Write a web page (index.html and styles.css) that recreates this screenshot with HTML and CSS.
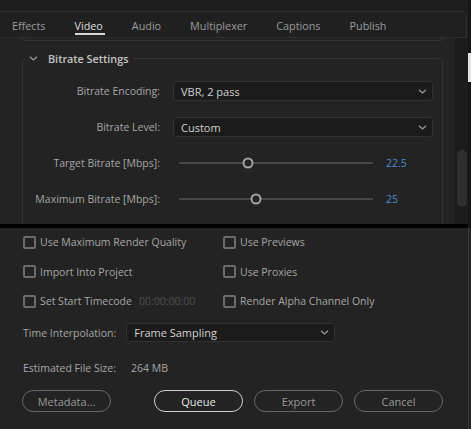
FILE: index.html
```html
<!doctype html>
<html lang="en">
    <head>
        <meta charset="UTF-8" />
        <meta name="viewport" content="width=device-width, initial-scale=1.0" />
        <title>Export Settings</title>
        <link rel="stylesheet" href="styles.css">
    </head>
    <body>
        <div class="window">
            <div class="topPane">
                <div class="tabs">
                    <span class="tab">Effects</span>
                    <span class="tab active">Video</span>
                    <span class="tab">Audio</span>
                    <span class="tab">Multiplexer</span>
                    <span class="tab">Captions</span>
                    <span class="tab">Publish</span>
                </div>
                <div class="scrollWrap">
                    <div class="scrollContent">
                        <div class="prevEnd"></div>
                        <fieldset class="group">
                            <legend>
                                <svg class="chev" width="9" height="5" viewBox="0 0 9 5"><path d="M1 0.8l3.5 3.2 3.5-3.2" /></svg>
                                <span>Bitrate Settings</span>
                            </legend>
                            <div class="row">
                                <label>Bitrate Encoding:</label>
                                <div class="select wide">
                                    <span>VBR, 2 pass</span>
                                    <svg class="chev" width="9" height="5" viewBox="0 0 9 5"><path d="M1 0.8l3.5 3.2 3.5-3.2" /></svg>
                                </div>
                            </div>
                            <div class="row">
                                <label>Bitrate Level:</label>
                                <div class="select wide">
                                    <span>Custom</span>
                                    <svg class="chev" width="9" height="5" viewBox="0 0 9 5"><path d="M1 0.8l3.5 3.2 3.5-3.2" /></svg>
                                </div>
                            </div>
                            <div class="row">
                                <label>Target Bitrate [Mbps]:</label>
                                <div class="slider">
                                    <div class="track"></div>
                                    <div class="knob" style="left: 35.6%"></div>
                                </div>
                                <span class="value">22.5</span>
                            </div>
                            <div class="row">
                                <label>Maximum Bitrate [Mbps]:</label>
                                <div class="slider">
                                    <div class="track"></div>
                                    <div class="knob" style="left: 39.7%"></div>
                                </div>
                                <span class="value">25</span>
                            </div>
                        </fieldset>
                    </div>
                    <div class="scrollbar"><div class="thumb"></div></div>
                </div>
            </div>
            <div class="divider"></div>
            <div class="bottomPane">
                <div class="checks">
                    <div class="check"><span class="box"></span>Use Maximum Render Quality</div>
                    <div class="check"><span class="box"></span>Use Previews</div>
                    <div class="check"><span class="box"></span>Import Into Project</div>
                    <div class="check"><span class="box"></span>Use Proxies</div>
                    <div class="check"><span class="box"></span>Set Start Timecode<span class="timecode">00:00:00:00</span></div>
                    <div class="check"><span class="box"></span>Render Alpha Channel Only</div>
                </div>
                <div class="timeRow">
                    <span>Time Interpolation:</span>
                    <div class="select narrow">
                        <span>Frame Sampling</span>
                        <svg class="chev" width="9" height="5" viewBox="0 0 9 5"><path d="M1 0.8l3.5 3.2 3.5-3.2" /></svg>
                    </div>
                </div>
                <div class="sizeRow">
                    <span class="sizeLabel">Estimated File Size:</span>
                    <span>264 MB</span>
                </div>
                <div class="buttons">
                    <button class="metadata">Metadata...</button>
                    <button class="primary">Queue</button>
                    <button>Export</button>
                    <button>Cancel</button>
                </div>
            </div>
        </div>
        <div class="edge">
            <div class="edgeTop"><div class="edgeMark"></div></div>
            <div class="edgeBottom"></div>
        </div>
    </body>
</html>
```

FILE: styles.css
```css
body {
    margin: 0;
    height: 429px;
    overflow: hidden;
    display: flex;
    background-color: #232323;
    font-family: "Open Sans", sans-serif;
    font-size: 10.5px;
    color: #a6a6a6;
}
.window {
    width: 468px;
    display: flex;
    flex-direction: column;
}
.topPane {
    height: 224px;
    box-sizing: border-box;
    padding-top: 11px;
    background-color: #1e1e1e;
    display: flex;
    flex-direction: column;
}
.tabs {
    width: 467px;
    height: 27px;
    box-sizing: border-box;
    display: flex;
    gap: 29px;
    padding-left: 12px;
    border: 1px solid #2e2e2e;
    border-left: none;
    border-top-right-radius: 5px;
    background-color: #202020;
    font-size: 10.8px;
}
.tab {
    display: flex;
    align-items: center;
    padding-top: 5px;
    margin-bottom: 2px;
    border-bottom: 2px solid transparent;
    color: #9c9c9c;
}
.tab.active {
    color: #dedede;
    border-bottom-color: #d6d6d6;
    padding-right: 2px;
    margin-right: -2px;
}
.scrollWrap {
    flex: 1;
    min-height: 0;
    display: flex;
    background-color: #232323;
}
.scrollContent {
    flex: 1;
    overflow: hidden;
}
.prevEnd {
    height: 2px;
    margin: 0 12px 0 22px;
    border: 1px solid #333;
    border-top: none;
    border-radius: 0 0 4px 4px;
}
.group {
    margin: 10px 12px 0 22px;
    padding: 7px 0 10px 0;
    border: 1px solid #333;
    border-radius: 4px;
    min-width: 0;
}
.group legend {
    display: flex;
    align-items: center;
    margin-left: 2px;
    padding: 0 5px 0 4px;
    color: #c6c6c6;
    font-weight: 600;
    font-size: 10.8px;
}
.group legend .chev {
    margin-right: 10px;
}
.chev path {
    fill: none;
    stroke: #9a9a9a;
    stroke-width: 1.2;
}
.row {
    height: 36px;
    display: flex;
    align-items: center;
}
.row label {
    width: 137px;
    margin-right: 13px;
    text-align: right;
}
.select {
    height: 20px;
    box-sizing: border-box;
    display: flex;
    align-items: center;
    justify-content: space-between;
    padding: 0 5px 0 7px;
    background-color: #1b1b1b;
    border: 1px solid #313131;
    border-radius: 3px;
    color: #d0d0d0;
    font-size: 11px;
}
.select.wide {
    width: 260px;
}
.select.narrow {
    width: 209px;
    height: 19px;
}
.slider {
    position: relative;
    width: 194px;
    height: 12px;
    margin-left: 6px;
}
.track {
    margin-top: 5px;
    height: 2px;
    background-color: #474747;
}
.knob {
    position: absolute;
    top: 50%;
    width: 11px;
    height: 11px;
    box-sizing: border-box;
    border: 2px solid #a4a4a4;
    border-radius: 50%;
    background-color: #232323;
    transform: translate(-50%, -50%);
}
.value {
    margin-left: 13px;
    color: #4a8ed6;
}
.scrollbar {
    width: 13px;
    box-sizing: border-box;
    padding-top: 112px;
    background-color: #1c1c1c;
}
.thumb {
    height: 57px;
    margin: 0 1px 0 2px;
    border-radius: 5px;
    background-color: #2e2e2e;
}
.divider {
    height: 4px;
    background-color: #000;
}
.bottomPane {
    flex: 1;
    padding: 4px 25px 0 23px;
}
.checks {
    display: grid;
    grid-template-columns: 200px 1fr;
    row-gap: 9.5px;
}
.check {
    height: 20px;
    display: flex;
    align-items: center;
}
.box {
    width: 13px;
    height: 13px;
    box-sizing: border-box;
    margin-right: 4px;
    border: 2px solid #6c6c6c;
    border-radius: 2px;
}
.timecode {
    margin-left: 7px;
    color: #4f4f4f;
}
.timeRow {
    margin-top: 12px;
    display: flex;
    align-items: center;
    gap: 10px;
}
.sizeRow {
    margin-top: 16px;
    height: 19px;
    display: flex;
    align-items: center;
}
.sizeLabel {
    width: 108px;
}
.buttons {
    margin: 13px 0 0 -1px;
    display: flex;
    gap: 11px;
}
.buttons button {
    width: 89px;
    height: 22px;
    border: 1px solid #676767;
    border-radius: 11px;
    background: transparent;
    color: #9a9a9a;
    font-family: "Open Sans", sans-serif;
    font-size: 11px;
    padding: 0;
}
.buttons .metadata {
    margin-right: 32px;
}
.buttons .primary {
    border-color: #cdcdcd;
    color: #e6e6e6;
}
.edge {
    width: 3px;
    display: flex;
    flex-direction: column;
}
.edgeTop {
    height: 228px;
    padding-top: 53px;
    box-sizing: border-box;
    background-color: #161616;
}
.edgeMark {
    height: 29px;
    background-color: #e4e4e4;
}
.edgeBottom {
    flex: 1;
    border-left: 1px solid #3a3a3a;
}
```
